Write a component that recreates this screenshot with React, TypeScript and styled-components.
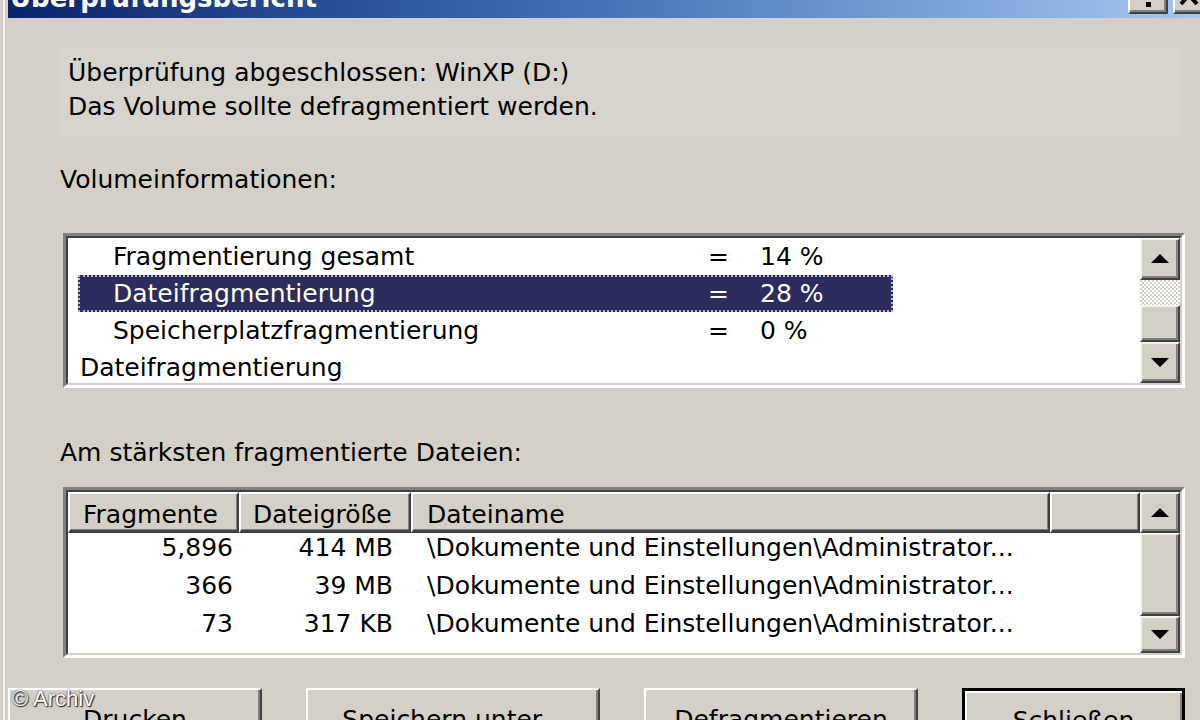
import styled, { createGlobalStyle } from 'styled-components';

const UI_FONT = `"DejaVu Sans", Verdana, sans-serif`;
const FACE = '#d4d0c8';

const GlobalStyle = createGlobalStyle`
  html, body {
    margin: 0;
    padding: 0;
  }
  body {
    width: 1200px;
    height: 720px;
    overflow: hidden;
    background: ${FACE};
    font-family: ${UI_FONT};
    font-size: 25px;
    color: #000;
  }
`;

const volumeRows = [
  { label: 'Fragmentierung gesamt', value: '14 %', indent: true },
  { label: 'Dateifragmentierung', value: '28 %', indent: true, selected: true },
  { label: 'Speicherplatzfragmentierung', value: '0 %', indent: true },
  { label: 'Dateifragmentierung', value: '', indent: false },
];

const files = [
  { count: '5,896', size: '414 MB', name: '\\Dokumente und Einstellungen\\Administrator...' },
  { count: '366', size: '39 MB', name: '\\Dokumente und Einstellungen\\Administrator...' },
  { count: '73', size: '317 KB', name: '\\Dokumente und Einstellungen\\Administrator...' },
];

const ArrowUp = () => (
  <svg width="18" height="10" viewBox="0 0 18 10">
    <polygon points="9,0 18,9 0,9" fill="#000" />
  </svg>
);

const ArrowDown = () => (
  <svg width="18" height="10" viewBox="0 0 18 10">
    <polygon points="0,0 18,0 9,9" fill="#000" />
  </svg>
);

const App = () => {
  return (
    <>
      <GlobalStyle />
      <Window>
        <TitleBar>
          <TitleText>Überprüfungsbericht</TitleText>
          <TitleButtons>
            <TitleButton>
              <svg width="36" height="30" viewBox="0 0 36 30">
                <path
                  d="M12 4 Q12 -2 18 -2 Q24 -2 24 4 Q24 8 18 11 L18 15"
                  stroke="#000"
                  strokeWidth="4"
                  fill="none"
                />
                <rect x="16" y="20" width="5" height="5" fill="#000" />
              </svg>
            </TitleButton>
            <TitleButton>
              <svg width="36" height="30" viewBox="0 0 36 30">
                <path d="M6 4 L22 22 M22 4 L6 22" stroke="#000" strokeWidth="4" />
              </svg>
            </TitleButton>
          </TitleButtons>
        </TitleBar>

        <Body>
          <InfoPanel>
            <InfoLine>Überprüfung abgeschlossen: WinXP (D:)</InfoLine>
            <InfoLine>Das Volume sollte defragmentiert werden.</InfoLine>
          </InfoPanel>

          <SectionLabel $top={24}>Volumeinformationen:</SectionLabel>

          <ListBox $top={35} $height={155}>
            <ListInner>
              <VolumeRows>
                {volumeRows.map((row, i) => (
                  <VolumeRow key={i} $selected={row.selected} $indent={row.indent}>
                    <VolumeLabel>{row.label}</VolumeLabel>
                    {row.value && (
                      <>
                        <VolumeEq>=</VolumeEq>
                        <span>{row.value}</span>
                      </>
                    )}
                  </VolumeRow>
                ))}
              </VolumeRows>
              <Scrollbar>
                <ScrollButton $h={42}>
                  <ArrowUp />
                </ScrollButton>
                <Track $h={25} />
                <Thumb $h={37} />
                <ScrollButton $h={41}>
                  <ArrowDown />
                </ScrollButton>
              </Scrollbar>
            </ListInner>
          </ListBox>

          <SectionLabel $top={46}>Am stärksten fragmentierte Dateien:</SectionLabel>

          <ListBox $top={16} $height={171}>
            <ListInner>
              <FileTable>
                <HeaderRow>
                  <HeaderCell $w={171} $pad={13}>Fragmente</HeaderCell>
                  <HeaderCell $w={172} $pad={12}>Dateigröße</HeaderCell>
                  <HeaderCell $w={639} $pad={14}>Dateiname</HeaderCell>
                  <HeaderCell $pad={0} />
                </HeaderRow>
                {files.map((f, i) => (
                  <FileRow key={i}>
                    <FileCell $w={171} $right $pad={6}>{f.count}</FileCell>
                    <FileCell $w={172} $right $pad={18}>{f.size}</FileCell>
                    <FileCell $pad={16}>{f.name}</FileCell>
                  </FileRow>
                ))}
              </FileTable>
              <Scrollbar>
                <ScrollButton $h={41}>
                  <ArrowUp />
                </ScrollButton>
                <Thumb />
                <ScrollButton $h={37}>
                  <ArrowDown />
                </ScrollButton>
              </Scrollbar>
            </ListInner>
          </ListBox>
        </Body>

        <ButtonRow>
          <PushButton $w={254}>Drucken</PushButton>
          <PushButton $w={294}>Speichern unter...</PushButton>
          <PushButton $w={274}>Defragmentieren</PushButton>
          <PushButton $w={223} $default>Schließen</PushButton>
        </ButtonRow>

        <Watermark>© Archiv</Watermark>
      </Window>
    </>
  );
};

const Window = styled.div`
  position: relative;
  width: 1200px;
  height: 720px;
  overflow: hidden;
  box-sizing: border-box;
  padding-left: 8px;
  background: linear-gradient(to right, ${FACE} 0 3px, #f3f1ec 3px 5px, ${FACE} 5px);
`;

const TitleBar = styled.div`
  display: flex;
  justify-content: space-between;
  align-items: flex-start;
  height: 48px;
  margin-top: -30px;
  margin-right: -20px;
  box-sizing: border-box;
  padding: 15px 7px 0 2px;
  background: linear-gradient(to right, #0a246a, #3f6cb4 45%, #a6caf0);
`;

const TitleText = styled.span`
  font-weight: bold;
  font-size: 26px;
  line-height: 1;
  color: #fff;
  white-space: nowrap;
`;

const TitleButtons = styled.div`
  display: flex;
  gap: 5px;
  margin-top: -5px;
`;

const TitleButton = styled.div`
  width: 40px;
  height: 34px;
  box-sizing: border-box;
  background: ${FACE};
  border: 2px solid;
  border-color: #fff #404040 #404040 #fff;
  box-shadow: inset -2px -2px #808080;
  display: flex;
  justify-content: center;
  align-items: flex-start;
`;

const Body = styled.div`
  display: flex;
  flex-direction: column;
  padding: 0 15px 0 52px;
`;

const InfoPanel = styled.div`
  margin: 29px 5px 0 0;
  padding: 9px 8px 13px;
  background: #d7d3cd;
`;

const InfoLine = styled.div`
  line-height: 34px;
  white-space: nowrap;
`;

const SectionLabel = styled.div<{ $top: number }>`
  margin-top: ${(p) => p.$top}px;
  line-height: 37px;
  white-space: nowrap;
`;

const ListBox = styled.div<{ $top: number; $height: number }>`
  box-sizing: border-box;
  height: ${(p) => p.$height}px;
  margin: ${(p) => p.$top}px 0 0 3px;
  border: 3px solid;
  border-color: #808080 #fff #fff #808080;
`;

const ListInner = styled.div`
  box-sizing: border-box;
  height: 100%;
  display: flex;
  overflow: hidden;
  background: #fff;
  border: 2px solid;
  border-color: #404040 ${FACE} ${FACE} #404040;
`;

const VolumeRows = styled.div`
  flex: 1;
  overflow: hidden;
`;

const VolumeRow = styled.div<{ $selected?: boolean; $indent?: boolean }>`
  display: flex;
  box-sizing: border-box;
  width: 815px;
  height: 37px;
  margin-left: 10px;
  padding-left: ${(p) => (p.$indent ? 33 : 0)}px;
  line-height: 33px;
  white-space: nowrap;
  border: 2px dotted ${(p) => (p.$selected ? '#b8b8cc' : 'transparent')};
  background: ${(p) => (p.$selected ? '#2c2c5e' : 'transparent')};
  color: ${(p) => (p.$selected ? '#fff' : '#000')};
`;

const VolumeLabel = styled.span`
  width: 595px;
  flex-shrink: 0;
`;

const VolumeEq = styled.span`
  width: 52px;
  flex-shrink: 0;
`;

const Scrollbar = styled.div`
  width: 40px;
  flex-shrink: 0;
  display: flex;
  flex-direction: column;
`;

const raised = `
  box-sizing: border-box;
  background: ${FACE};
  border: 2px solid;
  border-color: #f4f2ee #404040 #404040 #f4f2ee;
  box-shadow: inset -2px -2px #808080;
`;

const ScrollButton = styled.div<{ $h: number }>`
  ${raised}
  height: ${(p) => p.$h}px;
  flex-shrink: 0;
  display: flex;
  align-items: center;
  justify-content: center;
`;

const Track = styled.div<{ $h: number }>`
  height: ${(p) => p.$h}px;
  flex-shrink: 0;
  background: repeating-conic-gradient(#fff 0 25%, ${FACE} 0 50%) 0 0 / 4px 4px;
`;

const Thumb = styled.div<{ $h?: number }>`
  ${raised}
  ${(p) => (p.$h ? `height: ${p.$h}px; flex-shrink: 0;` : 'flex: 1;')}
`;

const FileTable = styled.div`
  flex: 1;
  display: flex;
  flex-direction: column;
  overflow: hidden;
`;

const HeaderRow = styled.div`
  display: flex;
  height: 41px;
  flex-shrink: 0;
`;

const HeaderCell = styled.div<{ $w?: number; $pad: number }>`
  box-sizing: border-box;
  ${(p) => (p.$w ? `width: ${p.$w}px; flex-shrink: 0;` : 'flex: 1;')}
  height: 41px;
  padding: 6px 0 0 ${(p) => p.$pad}px;
  line-height: 30px;
  white-space: nowrap;
  overflow: hidden;
  background: ${FACE};
  border-style: solid;
  border-width: 2px 2px 3px 2px;
  border-color: #fff #404040 #404040 #fff;
  box-shadow: inset -1px -1px #808080;
`;

const FileRow = styled.div`
  display: flex;
  height: 38px;
  flex-shrink: 0;
  line-height: 30px;
  white-space: nowrap;
`;

const FileCell = styled.div<{ $w?: number; $right?: boolean; $pad: number }>`
  box-sizing: border-box;
  ${(p) => (p.$w ? `width: ${p.$w}px; flex-shrink: 0;` : 'flex: 1;')}
  text-align: ${(p) => (p.$right ? 'right' : 'left')};
  ${(p) => (p.$right ? `padding-right: ${p.$pad}px;` : `padding-left: ${p.$pad}px;`)}
  overflow: hidden;
`;

const ButtonRow = styled.div`
  display: flex;
  gap: 44px;
  margin-top: 30px;
`;

const PushButton = styled.div<{ $w: number; $default?: boolean }>`
  width: ${(p) => p.$w}px;
  height: 60px;
  flex-shrink: 0;
  box-sizing: border-box;
  background: ${FACE};
  text-align: center;
  padding-top: 11px;
  line-height: 37px;
  white-space: nowrap;
  ${(p) =>
    p.$default
      ? `border: 3px solid #000; box-shadow: inset 2px 2px #fff, inset -2px -2px #808080;`
      : `border: 2px solid; border-color: #fff #404040 #404040 #fff; box-shadow: inset -2px -2px #808080;`}
`;

const Watermark = styled.span`
  position: absolute;
  left: 12px;
  top: 686px;
  font-family: 'Liberation Sans', Arial, sans-serif;
  font-size: 22px;
  color: #fff;
  text-shadow: 0 0 2px #222, 1px 1px 1px #222;
`;

export default App;
